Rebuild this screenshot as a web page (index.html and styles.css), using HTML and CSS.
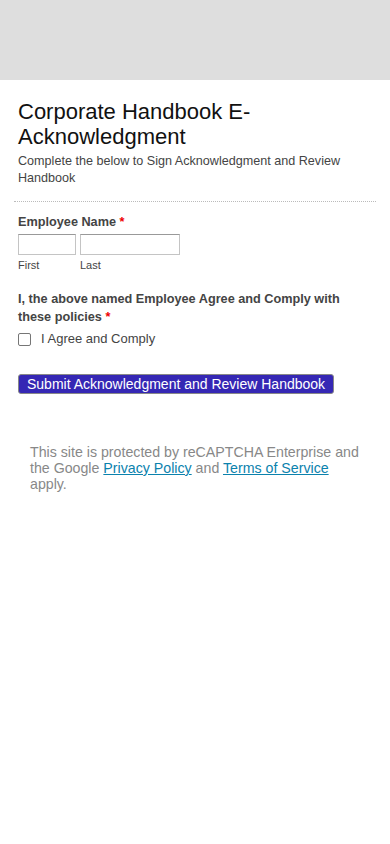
FILE: index.html
```html
<!DOCTYPE html>
<html lang="en">

<head>
    <meta charset="UTF-8">
    <meta name="viewport" content="width=device-width, initial-scale=1.0">
    <title>Corporate Handbook E-Acknowledgment</title>
    <link rel="stylesheet" href="styles.css">
</head>

<body>
    <header class="banner"></header>

    <form class="form">
        <div class="form-head">
            <h1 class="form-title">Corporate Handbook E-Acknowledgment</h1>
            <p class="form-desc">Complete the below to Sign Acknowledgment and Review Handbook</p>
        </div>

        <div class="field">
            <label class="field-label">Employee Name <span class="req">*</span></label>
            <div class="name-row">
                <div class="name-part">
                    <input type="text" class="input input-first">
                    <span class="sublabel">First</span>
                </div>
                <div class="name-part">
                    <input type="text" class="input input-last">
                    <span class="sublabel">Last</span>
                </div>
            </div>
        </div>

        <div class="field">
            <label class="field-label">I, the above named Employee Agree and Comply with these policies <span class="req">*</span></label>
            <label class="check">
                <span class="check-box"></span>
                <span>I Agree and Comply</span>
            </label>
        </div>

        <div class="actions">
            <button type="button" class="submit">Submit Acknowledgment and Review Handbook</button>
        </div>

        <p class="recaptcha">This site is protected by reCAPTCHA Enterprise and the Google <a href="#">Privacy Policy</a> and <a href="#">Terms of Service</a> apply.</p>
    </form>
</body>

</html>
```

FILE: styles.css
```css
body {
    font-family: "Liberation Sans", Arial, sans-serif;
    margin: 0;
    padding: 0;
    background-color: #fff;
    color: #444;
}

.banner {
    height: 80px;
    background-color: #dedede;
}

.form {
    padding: 0 14px;
}

.form-head {
    padding: 19px 4px 14px;
    border-bottom: 1px dotted #bbb;
}

.form-title {
    margin: 0;
    font-size: 22px;
    font-weight: normal;
    line-height: 25px;
    color: #111;
}

.form-desc {
    margin: 4px 0 0;
    font-size: 12.6px;
    line-height: 17px;
    color: #444;
}

.field {
    padding: 0 4px;
    margin-top: 11px;
}

.field + .field {
    margin-top: 18px;
}

.field-label {
    display: block;
    font-size: 12.7px;
    font-weight: bold;
    line-height: 18px;
    color: #444;
}

.req {
    color: #e00;
}

.name-row {
    display: flex;
    gap: 4px;
    margin-top: 3px;
}

.name-part {
    display: flex;
    flex-direction: column;
}

.input {
    box-sizing: border-box;
    height: 21px;
    margin: 0;
    padding: 2px 4px;
    border: 1px solid #c4c4c4;
    border-top-color: #999;
    background: #fff;
}

.input-first {
    width: 58px;
}

.input-last {
    width: 100px;
}

.sublabel {
    margin-top: 3px;
    font-size: 11px;
    line-height: 14px;
    color: #444;
}

.check {
    display: flex;
    align-items: center;
    gap: 10px;
    margin-top: 4px;
    font-size: 13px;
    line-height: 18px;
    color: #444;
}

.check-box {
    box-sizing: border-box;
    width: 13px;
    height: 13px;
    border: 1px solid #767676;
    border-radius: 2px;
    background: #fff;
}

.actions {
    padding: 0 4px;
    margin-top: 26px;
}

.submit {
    box-sizing: border-box;
    height: 20px;
    padding: 0 8px;
    font-family: "Liberation Sans", Arial, sans-serif;
    font-size: 14px;
    line-height: 18px;
    color: #fff;
    background-color: #3527b4;
    border: 1px solid #888;
    border-radius: 3px;
}

.recaptcha {
    margin: 50px 0 0;
    padding: 0 16px;
    font-size: 14.2px;
    line-height: 16px;
    color: #888;
}

.recaptcha a {
    color: #0b82ad;
}
```
